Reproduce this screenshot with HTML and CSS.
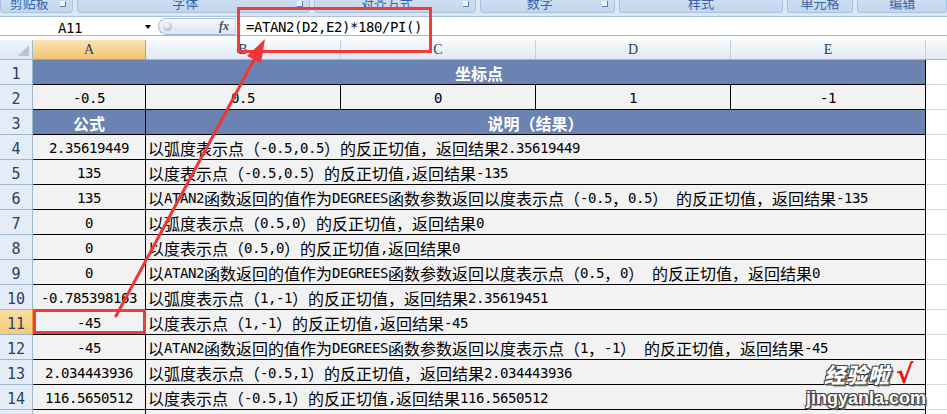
FILE: index.html
```html
<!DOCTYPE html>
<html lang="zh-CN">
<head>
<meta charset="utf-8">
<title>ATAN2</title>
<link rel="stylesheet" href="styles.css">
</head>
<body>
<div class="ribbon">
  <div class="grp g1"><span class="glabel">剪贴板</span><i class="launch"></i></div>
  <div class="grp g2"><span class="glabel">字体</span><i class="launch"></i></div>
  <div class="grp g3"><span class="glabel">对齐方式</span><i class="launch"></i></div>
  <div class="grp g4"><span class="glabel">数字</span><i class="launch"></i></div>
  <div class="grp g5"><span class="glabel">样式</span></div>
  <div class="grp g6"><span class="glabel">单元格</span></div>
  <div class="grp g7"><span class="glabel">编辑</span></div>
</div>
<div class="fbar">
  <div class="namebox">A11</div>
  <div class="ddwrap"><i class="dd"></i></div>
  <div class="pill"><i class="knob"></i><span class="fx">fx</span></div>
  <div class="formula">=ATAN2(D2,E2)*180/PI()</div>
</div>
<div class="gap"></div>
<div class="sheet">
  <div class="corner"><i class="tri"></i></div>
  <div class="ch sel">A</div>
  <div class="ch">B</div>
  <div class="ch">C</div>
  <div class="ch">D</div>
  <div class="ch">E</div>
  <div class="ch chf"></div>

  <div class="rh">1</div>
  <div class="c hd s5">坐标点</div>
  <div class="f"></div>

  <div class="rh">2</div>
  <div class="c ctr"><span class="m">-0.5</span></div>
  <div class="c ctr"><span class="m">0.5</span></div>
  <div class="c ctr"><span class="m">0</span></div>
  <div class="c ctr"><span class="m">1</span></div>
  <div class="c ctr"><span class="m">-1</span></div>
  <div class="f"></div>

  <div class="rh">3</div>
  <div class="c hd">公式</div>
  <div class="c hd s4">说明（结果）</div>
  <div class="f"></div>

  <div class="rh">4</div>
  <div class="c ctr"><span class="m">2.35619449</span></div>
  <div class="c s4 txt">以弧度表示点（<span class="m">-0.5,0.5</span>）的反正切值，返回结果<span class="m">2.35619449</span></div>
  <div class="f"></div>

  <div class="rh">5</div>
  <div class="c ctr"><span class="m">135</span></div>
  <div class="c s4 txt">以度表示点（<span class="m">-0.5,0.5</span>）的反正切值<span class="m">,</span>返回结果<span class="m">-135</span></div>
  <div class="f"></div>

  <div class="rh">6</div>
  <div class="c ctr"><span class="m">135</span></div>
  <div class="c s4 txt">以<span class="m">ATAN2</span>函数返回的值作为<span class="m">DEGREES</span>函数参数返回以度表示点（<span class="m">-0.5</span>，<span class="m">0.5</span>）<span class="m"> </span>的反正切值，返回结果<span class="m">-135</span></div>
  <div class="f"></div>

  <div class="rh">7</div>
  <div class="c ctr"><span class="m">0</span></div>
  <div class="c s4 txt">以弧度表示点（<span class="m">0.5,0</span>）的反正切值，返回结果<span class="m">0</span></div>
  <div class="f"></div>

  <div class="rh">8</div>
  <div class="c ctr"><span class="m">0</span></div>
  <div class="c s4 txt">以度表示点（<span class="m">0.5,0</span>）的反正切值<span class="m">,</span>返回结果<span class="m">0</span></div>
  <div class="f"></div>

  <div class="rh">9</div>
  <div class="c ctr"><span class="m">0</span></div>
  <div class="c s4 txt">以<span class="m">ATAN2</span>函数返回的值作为<span class="m">DEGREES</span>函数参数返回以度表示点（<span class="m">0.5</span>，<span class="m">0</span>）<span class="m"> </span>的反正切值，返回结果<span class="m">0</span></div>
  <div class="f"></div>

  <div class="rh">10</div>
  <div class="c ctr"><span class="m">-0.785398163</span></div>
  <div class="c s4 txt">以弧度表示点（<span class="m">1,-1</span>）的反正切值，返回结果<span class="m">2.35619451</span></div>
  <div class="f"></div>

  <div class="rh sel">11</div>
  <div class="c ctr"><span class="m">-45</span></div>
  <div class="c s4 txt">以度表示点（<span class="m">1,-1</span>）的反正切值<span class="m">,</span>返回结果<span class="m">-45</span></div>
  <div class="f"></div>

  <div class="rh">12</div>
  <div class="c ctr"><span class="m">-45</span></div>
  <div class="c s4 txt">以<span class="m">ATAN2</span>函数返回的值作为<span class="m">DEGREES</span>函数参数返回以度表示点（<span class="m">1</span>，<span class="m">-1</span>）<span class="m"> </span>的反正切值，返回结果<span class="m">-45</span></div>
  <div class="f"></div>

  <div class="rh">13</div>
  <div class="c ctr"><span class="m">2.034443936</span></div>
  <div class="c s4 txt">以弧度表示点（<span class="m">-0.5,1</span>）的反正切值，返回结果<span class="m">2.034443936</span></div>
  <div class="f"></div>

  <div class="rh">14</div>
  <div class="c ctr"><span class="m">116.5650512</span></div>
  <div class="c s4 txt">以度表示点（<span class="m">-0.5,1</span>）的反正切值<span class="m">,</span>返回结果<span class="m">116.5650512</span></div>
  <div class="f"></div>

  <div class="rh"></div>
  <div class="c"></div>
  <div class="c s4"></div>
  <div class="f"></div>
</div>

<div class="mark-formula"></div>
<div class="mark-cell"></div>
<svg class="arrow" width="947" height="414" viewBox="0 0 947 414">
  <line x1="116" y1="316" x2="255" y2="58" stroke="#ef3535" stroke-width="3" stroke-linecap="round"/>
  <polygon points="265,39 261,63 247,56" fill="#ef3535"/>
</svg>
<div class="watermark">
  <div class="wm-top"><span class="wm-cn">经验啦</span><span class="wm-check">√</span></div>
  <div class="wm-url">jingyanla.com</div>
</div>
</body>
</html>
```
FILE: styles.css
```css
* { box-sizing: border-box; }
html, body { margin: 0; padding: 0; }
body {
  width: 947px;
  height: 414px;
  overflow: hidden;
  position: relative;
  background: #ffffff;
  font-family: "Noto Sans CJK SC", sans-serif;
  color: #000;
}

/* ribbon */
.ribbon {
  height: 17px;
  display: flex;
  gap: 4px;
  background: #dce7f5;
  border-bottom: 1px solid #aac2df;
}
.grp {
  position: relative;
  height: 13px;
  overflow: hidden;
  background: linear-gradient(#cddef2, #c2d6ee);
  border: 1px solid #a9c2e1;
  border-top: none;
  border-radius: 0 0 4px 4px;
  text-align: center;
}
.g1 { width: 73px; padding-right: 14px; }
.g2 { width: 234px; padding-right: 16px; }
.g3 { width: 163px; padding-right: 16px; }
.g4 { width: 136px; padding-right: 16px; }
.g5 { width: 164px; }
.g6 { width: 67px; }
.g7 { width: 90px; }
.glabel {
  display: block;
  font-size: 13px;
  line-height: 13px;
  margin-top: -4px;
  color: #3b64a6;
  white-space: nowrap;
}
.launch {
  position: absolute;
  right: 6px;
  top: 1px;
  width: 6px;
  height: 6px;
  border-right: 1px solid #5a7fb5;
  border-bottom: 1px solid #5a7fb5;
  background: #eef4fb;
}

/* formula bar */
.fbar {
  height: 19px;
  display: flex;
  background: #ffffff;
  border-bottom: 1px solid #9db7d7;
}
.namebox {
  width: 140px;
  text-align: center;
  font-family: "DejaVu Sans Mono", monospace;
  font-size: 14px;
  letter-spacing: -0.4px;
  line-height: 18px;
  padding-top: 2px;
}
.ddwrap {
  width: 18px;
  padding-left: 5px;
  padding-top: 8px;
}
.dd {
  display: block;
  width: 0;
  height: 0;
  border-left: 3.5px solid transparent;
  border-right: 3.5px solid transparent;
  border-top: 4px solid #000;
}
.pill {
  width: 78px;
  height: 17px;
  margin-top: 1px;
  position: relative;
  border: 1px solid #a6bcd9;
  border-right-color: #c3d2e6;
  border-radius: 9px 0 0 9px;
  background: linear-gradient(#f7f9fc, #dce6f3);
}
.knob {
  position: absolute;
  left: 4px;
  top: 3px;
  width: 9px;
  height: 9px;
  border-radius: 50%;
  background: radial-gradient(circle at 40% 35%, #ffffff, #9aa8b8);
}
.fx {
  position: absolute;
  right: 6px;
  top: 0;
  font-family: "Liberation Serif", serif;
  font-style: italic;
  font-weight: bold;
  font-size: 12px;
  line-height: 15px;
  color: #4a4a4a;
}
.formula {
  flex: 1;
  padding-left: 10px;
  padding-top: 3px;
  font-family: "DejaVu Sans Mono", monospace;
  font-size: 14px;
  letter-spacing: -0.43px;
  line-height: 15px;
  white-space: nowrap;
}
.gap { height: 4px; background: #ffffff; }

/* sheet */
.sheet {
  height: 374px;
  overflow: hidden;
  display: grid;
  grid-template-columns: 33px 113px 195px 195px 195px 195px 21px;
  grid-template-rows: 20px;
  grid-auto-rows: 25px;
}
.corner {
  position: relative;
  background: linear-gradient(#eef3fa, #dfe8f4);
  border-right: 1px solid #9eb6ce;
  border-bottom: 1px solid #9eb6ce;
}
.tri {
  position: absolute;
  right: 3px;
  bottom: 3px;
  width: 0;
  height: 0;
  border-left: 11px solid transparent;
  border-bottom: 11px solid #b4c6de;
}
.ch {
  display: flex;
  align-items: center;
  justify-content: center;
  background: linear-gradient(#f9fbfd, #e1e9f4);
  border-right: 1px solid #c0d0e3;
  border-bottom: 1px solid #9eb6ce;
  font-family: "Liberation Serif", serif;
  font-size: 14px;
  color: #27415f;
  padding-top: 1px;
}
.ch.sel {
  background: linear-gradient(#fae3b4, #f3c572);
  border-right: 1px solid #f29436;
  border-bottom: 1px solid #f29436;
}
.chf { border-right: none; }
.rh {
  display: flex;
  align-items: center;
  justify-content: center;
  background: #e4ecf7;
  border-right: 1px solid #9eb6ce;
  border-bottom: 1px solid #9eb6ce;
  font-family: "DejaVu Sans Mono", monospace;
  font-size: 15px;
  color: #27415f;
  padding-top: 3px;
}
.rh.sel {
  background: linear-gradient(#f9dca4, #f5c978);
  border-right-color: #f29436;
}
.c {
  display: flex;
  align-items: center;
  background: #f2f2f2;
  border-right: 1px solid #000;
  border-bottom: 1px solid #000;
  font-size: 16px;
  line-height: 18px;
  padding-top: 2px;
  white-space: nowrap;
  overflow: hidden;
}
.ctr { justify-content: center; }
.txt { padding-left: 2px; }
.hd {
  justify-content: center;
  background: #6b83b3;
  color: #ffffff;
  font-weight: bold;
}
.s5 { grid-column: span 5; }
.s4 { grid-column: span 4; }
.f {
  background: #ffffff;
  border-bottom: 1px solid #d4dcea;
}
.m {
  font-family: "DejaVu Sans Mono", monospace;
  font-size: 14px;
  letter-spacing: -0.43px;
  white-space: pre;
}

/* overlays */
.mark-formula {
  position: absolute;
  left: 237px;
  top: 7px;
  width: 195px;
  height: 46px;
  border: 3px solid #f23c3c;
}
.mark-cell {
  position: absolute;
  left: 33px;
  top: 309px;
  width: 113px;
  height: 25px;
  border: 3px solid #f23c3c;
}
.arrow {
  position: absolute;
  left: 0;
  top: 0;
}
.watermark {
  position: absolute;
  left: 806px;
  top: 360px;
  width: 130px;
  font-weight: bold;
  color: #ffffff;
}
.wm-top {
  display: flex;
  align-items: center;
  padding-left: 18px;
  height: 28px;
}
.wm-cn {
  font-family: "Noto Sans CJK SC", sans-serif;
  font-size: 21px;
  font-weight: 900;
  font-style: italic;
  letter-spacing: 1px;
  color: #ffffff;
  text-shadow: -1px -1px 0 #444, 1px -1px 0 #444, -1px 1px 0 #444, 1px 1px 0 #444, 2px 2px 1px #777;
}
.wm-check {
  margin-left: 6px;
  font-family: "DejaVu Sans", sans-serif;
  font-size: 26px;
  font-weight: bold;
  color: #ee1111;
  line-height: 26px;
}
.wm-url {
  font-family: "Liberation Sans", sans-serif;
  font-size: 18px;
  line-height: 20px;
  color: #ffffff;
  text-shadow: -1px -1px 0 #444, 1px -1px 0 #444, -1px 1px 0 #444, 1px 1px 0 #444, 2px 2px 1px #777;
}
```
